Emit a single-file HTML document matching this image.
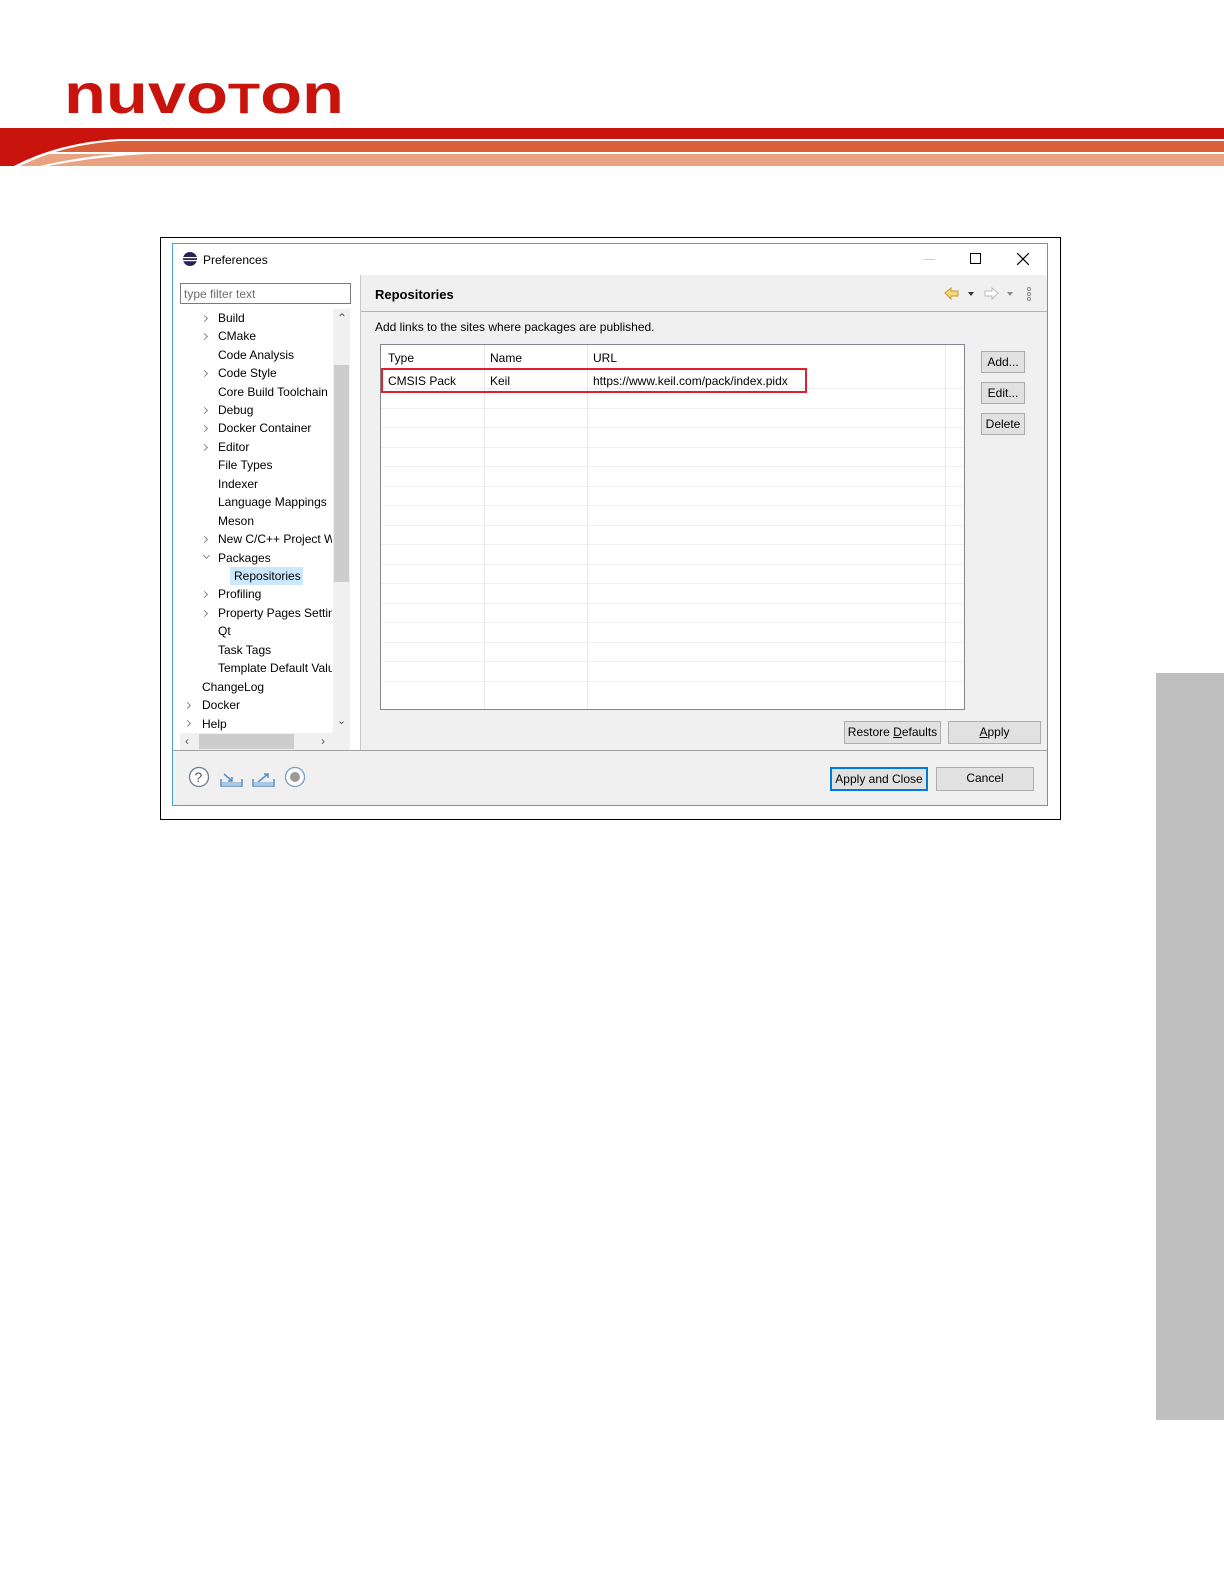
<!DOCTYPE html>
<html><head><meta charset="utf-8"><style>
*{margin:0;padding:0;box-sizing:border-box}
body{width:1224px;height:1584px;background:#fff;position:relative;overflow:hidden;font-family:"Liberation Sans",sans-serif;font-size:12px;color:#000}
.a{position:absolute}
.t{position:absolute;white-space:nowrap;line-height:14px}
.chev{position:absolute;width:5px;height:5px;border-right:1px solid #888;border-bottom:1px solid #888;transform:rotate(-45deg)}
.btn{position:absolute;background:#e1e1e1;border:1px solid #adadad;text-align:center;line-height:20px;font-size:12px}
.hl{position:absolute;left:0;right:0;height:1px;background:#f0f0f0}
</style></head><body>
<svg class="a" style="left:0;top:60px" width="1224" height="120">
<text x="64" y="53" font-family="Liberation Sans" font-weight="bold" font-size="56" fill="#c8140c" textLength="280" lengthAdjust="spacingAndGlyphs">nuvo<tspan font-size="43">T</tspan>on</text>
<rect x="0" y="68" width="1224" height="11" fill="#c8140c"/>
<rect x="0" y="81" width="1224" height="11" fill="#d9603a"/>
<rect x="0" y="94" width="1224" height="12" fill="#e9a381"/>
<path d="M0 68 L1224 68 L1224 79 L120 79 Q60 82 14 106 L0 106 Z" fill="#c8140c"/>
<path d="M14 106 Q60 82 120 79 L1224 79 L1224 81 L120 81 Q64 84 20 106 Z" fill="#fff"/>
<path d="M40 106 Q90 94 150 92 L1224 92 L1224 94 L150 94 Q100 96 48 106 Z" fill="#fff"/>
</svg>
<div class="a" style="left:1156px;top:673px;width:68px;height:747px;background:#bfbfbf"></div>
<div class="a" style="left:160px;top:237px;width:901px;height:583px;border:1px solid #000"></div>
<div class="a" style="left:172px;top:243px;width:876px;height:563px;border:1px solid #4a9fd8;background:#f0f0f0"></div>
<div class="a" style="left:173px;top:244px;width:874px;height:31px;background:#fff"></div>
<div class="a" style="left:173px;top:275px;width:188px;height:475px;background:#fff"></div>
<div class="a" style="left:360px;top:275px;width:1px;height:475px;background:#c8c8c8"></div>
<div class="a" style="left:361px;top:311px;width:686px;height:1px;background:#b4b4b4"></div>
<div class="a" style="left:173px;top:750px;width:874px;height:1px;background:#a0a0a0"></div>
<svg class="a" style="left:182px;top:251px" width="16" height="16"><circle cx="8" cy="8" r="7" fill="#2c2255"/><rect x="1" y="6" width="14" height="1.2" fill="#fff"/><rect x="1" y="9" width="14" height="1.2" fill="#fff"/></svg>
<div class="t" style="left:203px;top:253px">Preferences</div>
<div class="a" style="left:924px;top:259px;width:11px;height:1px;background:#ccc"></div>
<div class="a" style="left:970px;top:253px;width:11px;height:11px;border:1px solid #000"></div>
<svg class="a" style="left:1017px;top:253px" width="12" height="12"><path d="M0 0L12 12M12 0L0 12" stroke="#000" stroke-width="1.2"/></svg>
<div class="a" style="left:180px;top:283px;width:171px;height:21px;border:1px solid #7a7a7a;background:#fff"></div>
<div class="t" style="left:184px;top:287px;color:#6d6d6d">type filter text</div>
<div class="a" style="left:333px;top:309px;width:17px;height:424px;background:#f0f0f0"></div>
<div class="a" style="left:334px;top:365px;width:15px;height:217px;background:#cdcdcd"></div>
<div class="t" style="left:337px;top:311px;color:#555">&#8963;</div>
<div class="t" style="left:337px;top:714px;color:#555;font-size:11px">&#8964;</div>
<div class="a" style="left:180px;top:733px;width:170px;height:17px;background:#f0f0f0"></div>
<div class="a" style="left:199px;top:734px;width:95px;height:15px;background:#cdcdcd"></div>
<div class="t" style="left:185px;top:734px;color:#555">&lsaquo;</div>
<div class="t" style="left:321px;top:734px;color:#555">&rsaquo;</div>
<div class="a" style="left:230px;top:567px;width:73px;height:18px;background:#cce8ff"></div>
<div class="chev" style="left:202px;top:316px"></div><div class="t" style="left:218px;top:311px">Build</div>
<div class="chev" style="left:202px;top:334px"></div><div class="t" style="left:218px;top:329px">CMake</div>
<div class="t" style="left:218px;top:348px">Code Analysis</div>
<div class="chev" style="left:202px;top:371px"></div><div class="t" style="left:218px;top:366px">Code Style</div>
<div class="t" style="left:218px;top:385px;width:114px;overflow:hidden">Core Build Toolchain</div>
<div class="chev" style="left:202px;top:408px"></div><div class="t" style="left:218px;top:403px">Debug</div>
<div class="chev" style="left:202px;top:426px"></div><div class="t" style="left:218px;top:421px">Docker Container</div>
<div class="chev" style="left:202px;top:445px"></div><div class="t" style="left:218px;top:440px">Editor</div>
<div class="t" style="left:218px;top:458px">File Types</div>
<div class="t" style="left:218px;top:477px">Indexer</div>
<div class="t" style="left:218px;top:495px">Language Mappings</div>
<div class="t" style="left:218px;top:514px">Meson</div>
<div class="chev" style="left:202px;top:537px"></div><div class="t" style="left:218px;top:532px;width:114px;overflow:hidden">New C/C++ Project Wizard</div>
<div class="chev" style="left:204px;top:553px;transform:rotate(45deg)"></div><div class="t" style="left:218px;top:551px">Packages</div>
<div class="t" style="left:234px;top:569px">Repositories</div>
<div class="chev" style="left:202px;top:592px"></div><div class="t" style="left:218px;top:587px">Profiling</div>
<div class="chev" style="left:202px;top:611px"></div><div class="t" style="left:218px;top:606px;width:114px;overflow:hidden">Property Pages Settings</div>
<div class="t" style="left:218px;top:624px">Qt</div>
<div class="t" style="left:218px;top:643px">Task Tags</div>
<div class="t" style="left:218px;top:661px;width:114px;overflow:hidden">Template Default Values</div>
<div class="t" style="left:202px;top:680px">ChangeLog</div>
<div class="chev" style="left:185px;top:703px"></div><div class="t" style="left:202px;top:698px">Docker</div>
<div class="chev" style="left:185px;top:721px"></div><div class="t" style="left:202px;top:717px">Help</div>
<div class="t" style="left:375px;top:288px;font-weight:bold;font-size:13px">Repositories</div>
<svg class="a" style="left:942px;top:285px" width="95" height="18"><path d="M3 8L9 3V6H16V11H9V14Z" fill="#f6d77a" stroke="#c99a2a"/><path d="M26 7L32 7L29 11Z" fill="#333"/><path d="M56 8L50 3V6H43V11H50V14Z" fill="#fff" stroke="#bbb"/><path d="M65 7L71 7L68 11Z" fill="#888"/><circle cx="87" cy="4" r="1.6" fill="none" stroke="#888"/><circle cx="87" cy="9" r="1.6" fill="none" stroke="#888"/><circle cx="87" cy="14" r="1.6" fill="none" stroke="#888"/></svg>
<div class="t" style="left:375px;top:320px">Add links to the sites where packages are published.</div>
<div class="a" style="left:380px;top:344px;width:585px;height:366px;border:1px solid #828790;background:#fff;overflow:hidden">
<div class="hl" style="top:43px"></div><div class="hl" style="top:63px"></div><div class="hl" style="top:82px"></div><div class="hl" style="top:102px"></div><div class="hl" style="top:121px"></div><div class="hl" style="top:141px"></div><div class="hl" style="top:160px"></div><div class="hl" style="top:180px"></div><div class="hl" style="top:199px"></div><div class="hl" style="top:219px"></div><div class="hl" style="top:238px"></div><div class="hl" style="top:258px"></div><div class="hl" style="top:277px"></div><div class="hl" style="top:297px"></div><div class="hl" style="top:316px"></div><div class="hl" style="top:336px"></div>
<div class="a" style="left:103px;top:0;width:1px;height:366px;background:#e8e8e8"></div>
<div class="a" style="left:206px;top:0;width:1px;height:366px;background:#e8e8e8"></div>
<div class="a" style="left:564px;top:0;width:1px;height:366px;background:#e8e8e8"></div>
</div>
<div class="t" style="left:388px;top:351px">Type</div>
<div class="t" style="left:490px;top:351px">Name</div>
<div class="t" style="left:593px;top:351px">URL</div>
<div class="t" style="left:388px;top:374px">CMSIS Pack</div>
<div class="t" style="left:490px;top:374px">Keil</div>
<div class="t" style="left:593px;top:374px">https://www.keil.com/pack/index.pidx</div>
<div class="a" style="left:381px;top:368px;width:426px;height:25px;border:2px solid #e0202e"></div>
<div class="btn" style="left:981px;top:351px;width:44px;height:22px">Add...</div>
<div class="btn" style="left:981px;top:382px;width:44px;height:22px">Edit...</div>
<div class="btn" style="left:981px;top:413px;width:44px;height:22px">Delete</div>
<div class="btn" style="left:844px;top:721px;width:97px;height:23px">Restore <u>D</u>efaults</div>
<div class="btn" style="left:948px;top:721px;width:93px;height:23px"><u>A</u>pply</div>
<div class="btn" style="left:830px;top:767px;width:98px;height:24px;border:2px solid #0078d7;line-height:20px">Apply and Close</div>
<div class="btn" style="left:936px;top:767px;width:98px;height:24px">Cancel</div>
<svg class="a" style="left:188px;top:766px" width="120" height="24"><circle cx="11" cy="11" r="9.5" fill="#fff" stroke="#6d7c8c" stroke-width="1.3"/><text x="6.5" y="16" font-size="14" font-family="Liberation Sans" fill="#555">?</text>
<path d="M33 13V20H54V13M36 8L44 15M44 11V15H40" fill="none" stroke="#5a8ec0" stroke-width="1.5"/><rect x="34" y="16" width="19" height="4" fill="#a9c6e4"/>
<path d="M65 13V20H86V13M70 16L80 8M76 8H80V12" fill="none" stroke="#5a8ec0" stroke-width="1.5"/><rect x="66" y="16" width="19" height="4" fill="#a9c6e4"/>
<circle cx="107" cy="11" r="9.5" fill="#fff" stroke="#7a9cc0" stroke-width="1.3"/><circle cx="107" cy="11" r="5" fill="#9a9a9a"/></svg>
</body></html>
